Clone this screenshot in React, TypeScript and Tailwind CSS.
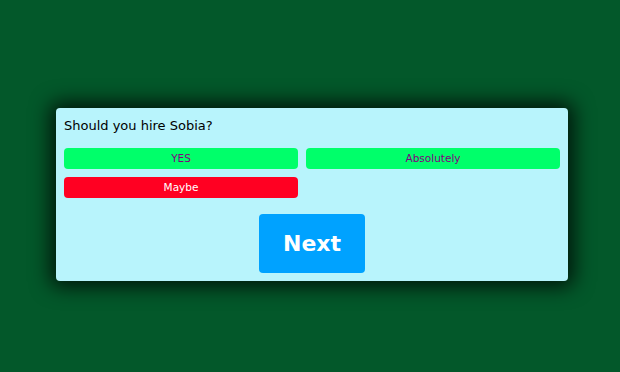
const options = [
  { label: "YES", className: "w-[234px] bg-[#00ff6a] text-[#800080]" },
  { label: "Absolutely", className: "flex-1 bg-[#00ff6a] text-[#800080]" },
  { label: "Maybe", className: "w-[234px] bg-[#ff0022] text-white" },
];

export default function App() {
  return (
    <div
      className="h-[372px] w-full bg-[#03582a] pl-[56px] pt-[108px]"
      style={{ fontFamily: '"DejaVu Sans", Verdana, sans-serif' }}
    >
      <div className="flex w-[512px] flex-col rounded-[4px] bg-[#b8f4fc] p-2 shadow-[0_0_20px_6px_rgba(0,0,0,0.75)]">
        <p className="pt-[1px] text-[13px] leading-[17px] text-black">Should you hire Sobia?</p>
        <div className="mt-[14px] flex flex-wrap gap-2">
          {options.map((o) => (
            <button
              key={o.label}
              className={`h-[21px] rounded-[4px] text-[10.5px] ${o.className}`}
            >
              {o.label}
            </button>
          ))}
        </div>
        <div className="mt-4 flex justify-center">
          <button className="h-[59px] w-[106px] rounded-[4px] bg-[#00a2ff] text-[22px] font-bold text-white">
            Next
          </button>
        </div>
      </div>
    </div>
  );
}
